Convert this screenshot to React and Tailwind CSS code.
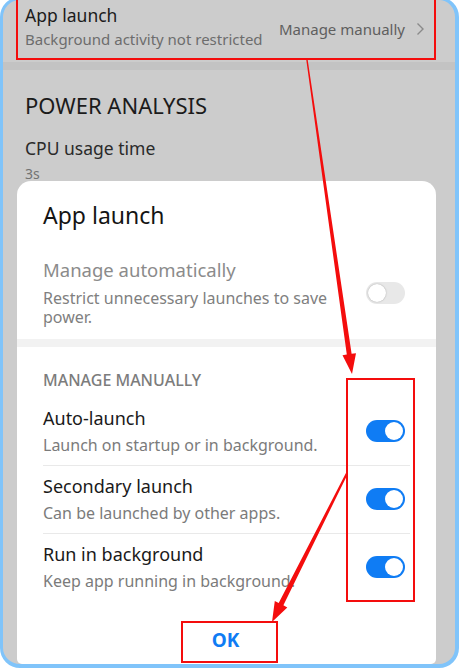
import React from "react";

const Toggle = ({ on }) => (
  <div
    className={`mr-[5px] w-[39px] h-[22px] shrink-0 rounded-full flex items-center px-[2px] ${
      on ? "bg-[#0f7cf4] justify-end" : "bg-[#e8e8e8] justify-start"
    }`}
  >
    <div
      className={`w-[18px] h-[18px] rounded-full bg-white ${
        on ? "" : "shadow-[0_0_1.5px_rgba(0,0,0,0.35)]"
      }`}
    />
  </div>
);

const Row = ({ title, sub, last }) => (
  <div
    className={`flex items-center justify-between pt-[8px] ${
      last ? "pb-[10px]" : "pb-[10px] border-b border-[#e9e9e9]"
    }`}
  >
    <div className="flex flex-col gap-[5px]">
      <span className="text-[18px] leading-[24px] text-[#1a1a1a]">{title}</span>
      <span className="text-[16px] leading-[20px] text-[#7b7b7b]">{sub}</span>
    </div>
    <Toggle on />
  </div>
);

const Annotations = () => (
  <svg
    className="absolute top-0 left-0 pointer-events-none"
    width="459"
    height="669"
    viewBox="0 0 459 669"
  >
    <g fill="none" stroke="#f40d0d" strokeWidth="2">
      <rect x="17" y="-5" width="418" height="64" />
      <rect x="347" y="379" width="67" height="222" />
      <rect x="182" y="622" width="95" height="40" />
    </g>
    <g fill="#f40d0d">
      <polygon points="307.7,59.9 351.6,353.8 356,353.2 352,374 342.5,355.2 346.8,354.6 306.3,60.1" />
      <polygon points="348,473.4 283.4,605.3 287.3,607.4 272,622 274.8,601 278.7,603 346.2,472.6" />
    </g>
  </svg>
);

export default function App() {
  return (
    <div className="relative w-[459px] h-[669px] overflow-hidden bg-white font-['Noto_Sans',sans-serif]">
      <div className="mt-[-3px] h-[671px] rounded-[20px] border-t-[3px] border-l-[3px] border-r-[4px] border-b-[4px] border-[#80c4fa] bg-[#cccccc] overflow-hidden flex flex-col">
        {/* list item behind the dialog */}
        <div className="h-[59px] flex items-start justify-between pl-[22px] pr-[30px] pt-[3px]">
          <div className="flex flex-col gap-[2px]">
            <span className="text-[17.5px] leading-[24px] text-[#1b1b1b]">App launch</span>
            <span className="text-[15px] leading-[20px] text-[#6d6d6d]">
              Background activity not restricted
            </span>
          </div>
          <div className="flex items-center gap-[11px] mt-[15px] text-[#5f5f5f]">
            <span className="text-[15px] leading-[22px]">Manage manually</span>
            <svg width="9" height="14" viewBox="0 0 9 14">
              <path d="M1.5 1.5 L7 7 L1.5 12.5" fill="none" stroke="#8a8a8a" strokeWidth="1.4" />
            </svg>
          </div>
        </div>
        <div className="mt-[3px] h-[8px] bg-[#c3c3c3]" />

        <div className="pl-[22px] pt-[21px] flex flex-col">
          <span className="text-[22px] leading-[28px] text-[#1b1b1b]">POWER ANALYSIS</span>
          <span className="mt-[17px] text-[17.5px] leading-[24px] text-[#2a2a2a]">CPU usage time</span>
          <span className="mt-[5px] text-[14px] leading-[17px] text-[#727272]">3s</span>
        </div>

        {/* dialog */}
        <div className="ml-[14px] w-[419px] flex-1 mt-[-1px] bg-white rounded-t-[14px] rounded-b-[5px] flex flex-col">
          <div className="px-[26px] pt-[20px]">
            <span className="text-[23px] leading-[28px] text-[#141414]">App launch</span>
            <div className="mt-[28px] flex items-center justify-between">
              <div className="w-[310px] flex flex-col gap-[7px]">
                <span className="text-[18.5px] leading-[24px] text-[#8b8b8b]">Manage automatically</span>
                <span className="text-[16px] leading-[19px] text-[#808080]">
                  Restrict unnecessary launches to save power.
                </span>
              </div>
              <Toggle on={false} />
            </div>
          </div>
          <div className="mt-[12px] h-[8px] bg-[#f2f2f2]" />

          <div className="px-[26px] pt-[23px]">
            <div className="text-[16px] leading-[20px] font-medium text-[#7c7c7c] mb-[8px]">
              MANAGE MANUALLY
            </div>
            <Row title="Auto-launch" sub="Launch on startup or in background." />
            <Row title="Secondary launch" sub="Can be launched by other apps." />
            <Row title="Run in background" sub="Keep app running in background." last />
          </div>

          <div className="mt-[27px] flex justify-center">
            <span className="ml-[-2px] text-[19px] leading-[24px] font-bold text-[#0f7cf4]">OK</span>
          </div>
        </div>
      </div>
      <Annotations />
    </div>
  );
}
